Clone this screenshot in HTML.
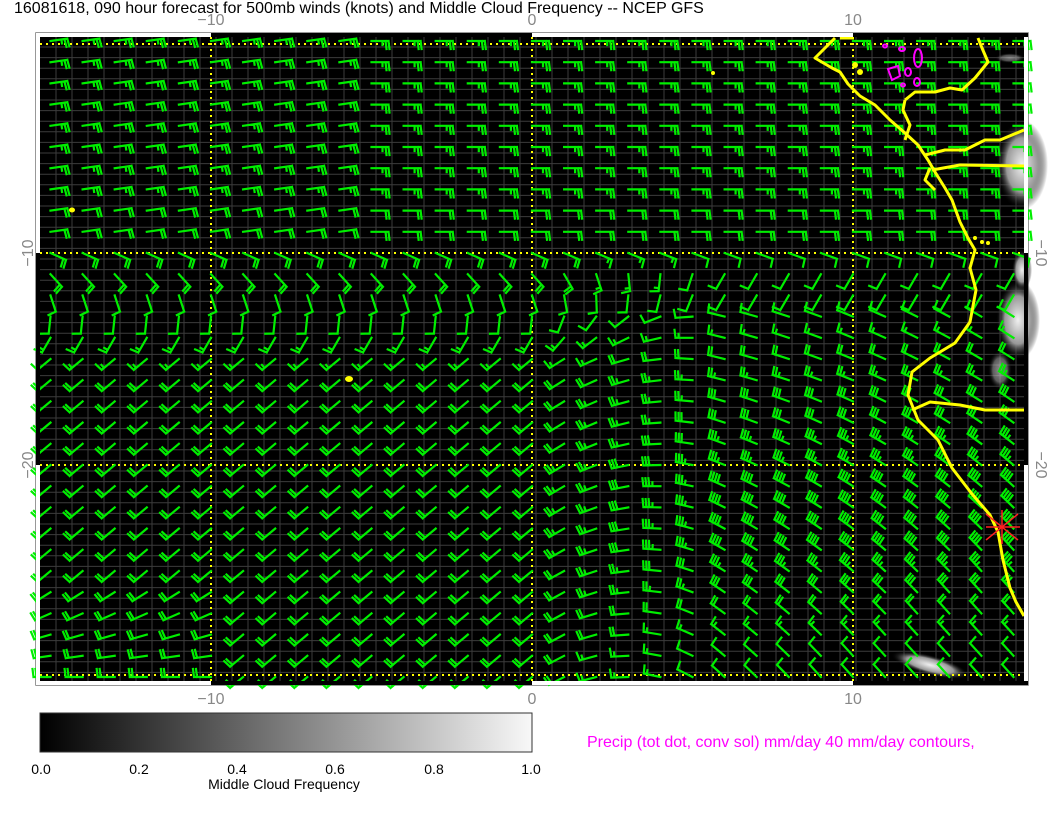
<!DOCTYPE html>
<html><head><meta charset="utf-8"><style>
html,body{margin:0;padding:0;background:#fff;width:1056px;height:816px;overflow:hidden}
svg{display:block}
text{font-family:"Liberation Sans",sans-serif}
</style></head><body>
<svg id="s" width="1056" height="816" xmlns="http://www.w3.org/2000/svg">
<defs>
<linearGradient id="cb" x1="0" x2="1" y1="0" y2="0"><stop offset="0" stop-color="#000"/><stop offset="1" stop-color="#f8f8f8"/></linearGradient>
<radialGradient id="cl" cx="0.5" cy="0.5" r="0.5"><stop offset="0" stop-color="#f0f0f0"/><stop offset="0.6" stop-color="#999"/><stop offset="1" stop-color="#000" stop-opacity="0"/></radialGradient>
</defs>
<text x="14" y="13" font-size="16" fill="#000">16081618, 090 hour forecast for 500mb winds (knots) and Middle Cloud Frequency -- NCEP GFS</text>
<rect x="36" y="33" width="992" height="652" fill="#fff" stroke="#777" stroke-width="1.5"/>
<rect x="40" y="37" width="984" height="644" fill="#000"/>
<g id="grid" stroke="#3c3c3c" stroke-width="1"></g>
<g id="clouds">
<ellipse cx="1022" cy="165" rx="26" ry="45" fill="url(#cl)"/>
<ellipse cx="1018" cy="320" rx="22" ry="40" fill="url(#cl)"/>
<ellipse cx="1022" cy="270" rx="10" ry="20" fill="url(#cl)"/>
<ellipse cx="1000" cy="370" rx="12" ry="20" fill="url(#cl)" opacity="0.6"/>
<ellipse cx="930" cy="665" rx="40" ry="10" fill="url(#cl)" transform="rotate(15 930 665)"/>
<ellipse cx="1010" cy="58" rx="15" ry="5" fill="url(#cl)" opacity="0.5"/>
</g>
<g id="dots" stroke="#ffff00" stroke-width="2" stroke-dasharray="2,4">
<line x1="40" y1="44" x2="1024" y2="44"/><line x1="40" y1="253" x2="1024" y2="253"/>
<line x1="40" y1="465" x2="1024" y2="465"/><line x1="40" y1="675" x2="1024" y2="675"/>
<line x1="211" y1="37" x2="211" y2="681"/><line x1="532" y1="37" x2="532" y2="681"/><line x1="853" y1="37" x2="853" y2="681"/>
</g>
<g id="barbs" stroke="#00ee00" stroke-width="2.2" fill="none" stroke-linecap="square"></g>
<g stroke="#ffff00" stroke-width="3" fill="none" stroke-linejoin="round">
<polyline points="835,38 825,48 815,58 832,68 840,72 848,84 860,96 875,105 890,120 905,133 918,145 928,160 935,172 945,188 952,200 960,222 968,238 975,250 970,268 976,290 970,322 955,343 930,358 912,372 908,395 918,420 938,440 952,468 972,494 990,515 998,532 1003,560 1010,588 1016,602 1024,616"/>
<polyline points="905,100 915,92 935,92 950,88 962,90 975,78 988,62 982,48 978,38"/>
<polyline points="905,100 903,110 910,125 905,140"/>
<polyline points="925,155 945,150 965,150 985,140 1000,140 1024,130"/>
<polyline points="932,170 960,165 1024,166"/>
<polyline points="912,410 930,402 960,405 985,410 1024,410"/>
<polyline points="930,168 925,180 935,190"/>
<line x1="840" y1="38" x2="854" y2="38"/>
</g>
<g fill="#ffff00"><ellipse cx="72" cy="210" rx="3" ry="2.5"/><ellipse cx="349" cy="379" rx="4" ry="3"/><ellipse cx="713" cy="73" rx="2" ry="2"/><circle cx="975" cy="238" r="2"/><circle cx="982" cy="242" r="2"/><circle cx="988" cy="243" r="2"/><circle cx="855" cy="65" r="3"/><circle cx="860" cy="72" r="3"/></g>
<g stroke="#ff00ff" stroke-width="2" fill="none">
<path d="M888,69 L898,66 L900,76 L892,80 Z"/><ellipse cx="918" cy="58" rx="4" ry="9"/><ellipse cx="908" cy="72" rx="3" ry="4"/><ellipse cx="917" cy="82" rx="3" ry="4"/><ellipse cx="902" cy="49" rx="3" ry="2"/><ellipse cx="885" cy="46" rx="2" ry="1.5"/><ellipse cx="903" cy="85" rx="2" ry="1.5"/>
</g>
<g stroke="#ff2020" stroke-width="1.5"><line x1="986" y1="514" x2="1018" y2="540"/><line x1="986" y1="540" x2="1018" y2="514"/><line x1="1002" y1="510" x2="1002" y2="544"/><line x1="986" y1="527" x2="1020" y2="527"/></g>
<g id="bars"></g>
<g fill="#888" font-size="16" text-anchor="middle">
<text x="211" y="25">−10</text><text x="532" y="25">0</text><text x="853" y="25">10</text>
<text x="211" y="704">−10</text><text x="532" y="704">0</text><text x="853" y="704">10</text>
<text transform="translate(33,253) rotate(-90)">−10</text><text transform="translate(33,465) rotate(-90)">−20</text>
<text transform="translate(1036,253) rotate(90)">−10</text><text transform="translate(1036,465) rotate(90)">−20</text>
</g>
<rect x="40" y="713" width="492" height="39" fill="url(#cb)" stroke="#333" stroke-width="1"/>
<g font-size="14" fill="#000" text-anchor="middle">
<text x="41" y="774">0.0</text><text x="139" y="774">0.2</text><text x="237" y="774">0.4</text><text x="335" y="774">0.6</text><text x="434" y="774">0.8</text><text x="531" y="774">1.0</text>
<text x="284" y="789">Middle Cloud Frequency</text>
</g>
<text x="587" y="747" font-size="16" fill="#ff00ff">Precip (tot dot, conv sol) mm/day 40 mm/day contours,</text>
</svg>
<script>
var NS="http://www.w3.org/2000/svg";
function el(p,t,a){var e=document.createElementNS(NS,t);for(var k in a)e.setAttribute(k,a[k]);p.appendChild(e);return e;}
var g=document.getElementById('grid');
for(var x=56;x<1024;x+=16)el(g,'line',{x1:x,y1:37,x2:x,y2:681});
for(var y=47;y<681;y+=10.6)el(g,'line',{x1:40,y1:y,x2:1024,y2:y});
var bars=document.getElementById('bars');
[[36,211,'#fff'],[211,532,'#000'],[532,853,'#fff'],[853,1028,'#000']].forEach(function(b){
 el(bars,'rect',{x:b[0],y:33,width:b[1]-b[0],height:4,fill:b[2]});
 el(bars,'rect',{x:b[0],y:681,width:b[1]-b[0],height:4,fill:b[2]});});
[[37,253,'#fff'],[253,465,'#000'],[465,681,'#fff']].forEach(function(b){
 el(bars,'rect',{x:36,y:b[0],width:4,height:b[1]-b[0],fill:b[2]});
 el(bars,'rect',{x:1024,y:b[0],width:4,height:b[1]-b[0],fill:b[2]});});
var bg=document.getElementById('barbs');
function field(lon,lat){
 var a,n;
 if(lat>=-9){a=lon<-5?-8:0;n=2.5;if(lat<-7)n=2;}
 else{
  var aw=Math.min(140,(-9-lat)*24);if(lon<-9&&lat<-25)aw+=(-25-lat)*8;
  var nw=lat>-12?2:(lat>-14?1:(lat>-16?1.5:2));
  var ae=Math.min(228,188+Math.max(0,lon-3)*2+Math.max(0,-lat-16)*2);
  if(lat>-13)ae=lat>-11?20:120;
  var ne;if(lat>-13)ne=1;else if(lat>-16)ne=1+(-13-lat)*0.5;else if(lat>-24)ne=Math.min(4,2.5+(-16-lat)*0.3);else ne=Math.max(1,4-(-24-lat)*0.6);
  var t=Math.max(0,Math.min(1,(lon)/6));
  a=aw*(1-t)+ae*t;n=nw*(1-t)+ne*t;
 }
 return [a,n];
}
for(var k=-15;k<=15;k++){for(var lat=0;lat>=-30;lat--){
 var lon=k;
 var sx=532+k*32.1,sy=253-(lat+10)*21.2;
 var f=field(lon,lat);var a=f[0]*Math.PI/180,n=Math.round(f[1]*2)/2;
 var L=17,dx=Math.cos(a),dy=Math.sin(a);
 var px=Math.cos(a+Math.PI/2),py=Math.sin(a+Math.PI/2);
 var d='M'+sx.toFixed(1)+','+sy.toFixed(1)+'L'+(sx+dx*L).toFixed(1)+','+(sy+dy*L).toFixed(1);
 var full=Math.floor(n),half=n-full>0;
 for(var i=0;i<full;i++){var bx=sx+dx*(L-i*3),by=sy+dy*(L-i*3);
  d+='M'+bx.toFixed(1)+','+by.toFixed(1)+'l'+(px*8+dx*1).toFixed(1)+','+(py*8+dy*1).toFixed(1);}
 if(half){var bx2=sx+dx*(L-full*3),by2=sy+dy*(L-full*3);d+='M'+bx2.toFixed(1)+','+by2.toFixed(1)+'l'+(px*4).toFixed(1)+','+(py*4).toFixed(1);}
 el(bg,'path',{d:d});
}}
</script>
</body></html>
